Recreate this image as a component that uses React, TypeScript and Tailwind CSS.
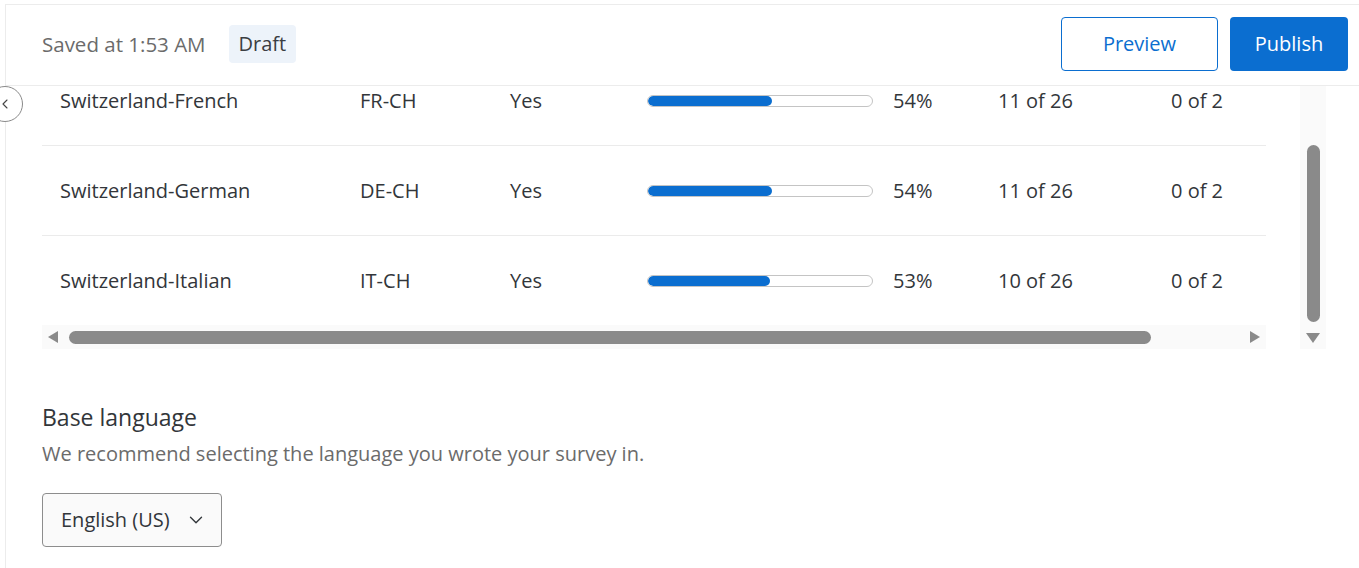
import { ChevronDown, ChevronLeft } from "lucide-react";

const rows = [
  { name: "Switzerland-French", code: "FR-CH", pct: 54, done: "11 of 26" },
  { name: "Switzerland-German", code: "DE-CH", pct: 54, done: "11 of 26" },
  { name: "Switzerland-Italian", code: "IT-CH", pct: 53, done: "10 of 26" },
];

function Row({ r }: { r: (typeof rows)[number] }) {
  return (
    <div className="flex h-[90px] items-center border-b border-[#ebebeb] text-[20px] text-[#32363a]">
      <div className="w-[318px] pl-[18px]">{r.name}</div>
      <div className="w-[150px]">{r.code}</div>
      <div className="w-[137px]">Yes</div>
      <div className="w-[246px]">
        <div className="h-[12px] w-[226px] overflow-hidden rounded-full border border-[#c4c4c4] bg-white">
          <div className="h-full rounded-full bg-[#0b6ed0]" style={{ width: `${r.pct + 1.5}%` }} />
        </div>
      </div>
      <div className="w-[105px]">{r.pct}%</div>
      <div className="w-[173px]">{r.done}</div>
      <div>0 of 2</div>
    </div>
  );
}

export default function App() {
  return (
    <div
      className="relative h-[568px] w-full overflow-hidden bg-white"
      style={{ fontFamily: "'Open Sans', 'Noto Sans', sans-serif" }}
    >
      <div className="ml-[5px] mt-[4px] h-full border-l border-t border-[#ececec]">
        {/* header */}
        <div className="flex h-[81px] items-center border-b border-[#ececec] pb-[2px] pl-[36px] pr-[11px]">
          <span className="text-[20.5px] text-[#6b6b6b]">Saved at 1:53 AM</span>
          <span className="ml-[23px] rounded-[4px] bg-[#edf3fa] px-[10px] py-[4px] text-[20px] text-[#3b3e42]">
            Draft
          </span>
          <div className="ml-auto flex gap-[12px]">
            <button className="h-[54px] w-[157px] rounded-[4px] border border-[#0b6ed0] bg-white text-[20px] text-[#0b6ed0]">
              Preview
            </button>
            <button className="h-[54px] w-[118px] rounded-[4px] bg-[#0b6ed0] text-[20px] text-white">
              Publish
            </button>
          </div>
        </div>

        {/* table scroll region */}
        <div className="flex h-[263px] pl-[36px]">
          <div className="flex w-[1224px] flex-col">
            <div className="h-[239px] overflow-hidden">
              <div className="-mt-[30px]">
                {rows.map((r) => (
                  <Row key={r.name} r={r} />
                ))}
              </div>
            </div>
            <div className="flex h-[24px] items-center bg-[#fafafa] px-[6px]">
              <svg width="10" height="12" viewBox="0 0 10 12">
                <path d="M10 0 L0 6 L10 12 Z" fill="#8a8a8a" />
              </svg>
              <div className="ml-[11px] h-[13px] w-[1082px] rounded-full bg-[#8a8a8a]" />
              <svg className="ml-auto" width="10" height="12" viewBox="0 0 10 12">
                <path d="M0 0 L10 6 L0 12 Z" fill="#8a8a8a" />
              </svg>
            </div>
          </div>
          <div className="ml-[34px] flex w-[26px] flex-col items-center bg-[#fafafa]">
            <div className="mt-[59px] h-[177px] w-[13px] rounded-full bg-[#8a8a8a]" />
            <svg className="mt-[11px]" width="14" height="10" viewBox="0 0 14 10">
              <path d="M0 0 L14 0 L7 10 Z" fill="#8a8a8a" />
            </svg>
          </div>
        </div>

        {/* base language */}
        <div className="pl-[36px] pt-[53px]">
          <h2 className="text-[23px] leading-[30px] text-[#32363a]">Base language</h2>
          <p className="mt-[8px] text-[20px] leading-[28px] text-[#6b6b6b]">
            We recommend selecting the language you wrote your survey in.
          </p>
          <button className="mt-[25px] flex h-[54px] w-[180px] items-center rounded-[4px] border border-[#8d8d8d] bg-[#fafafa] pl-[18px] pr-[14px] text-[20px] text-[#32363a]">
            English (US)
            <ChevronDown className="ml-auto" size={22} strokeWidth={1.5} />
          </button>
        </div>
      </div>

      {/* collapse toggle */}
      <div className="absolute left-[-13px] top-[86px] flex h-[36px] w-[36px] items-center justify-center rounded-full border border-[#8a8a8a] bg-white">
        <ChevronLeft size={16} strokeWidth={1.6} color="#444" />
      </div>
    </div>
  );
}
